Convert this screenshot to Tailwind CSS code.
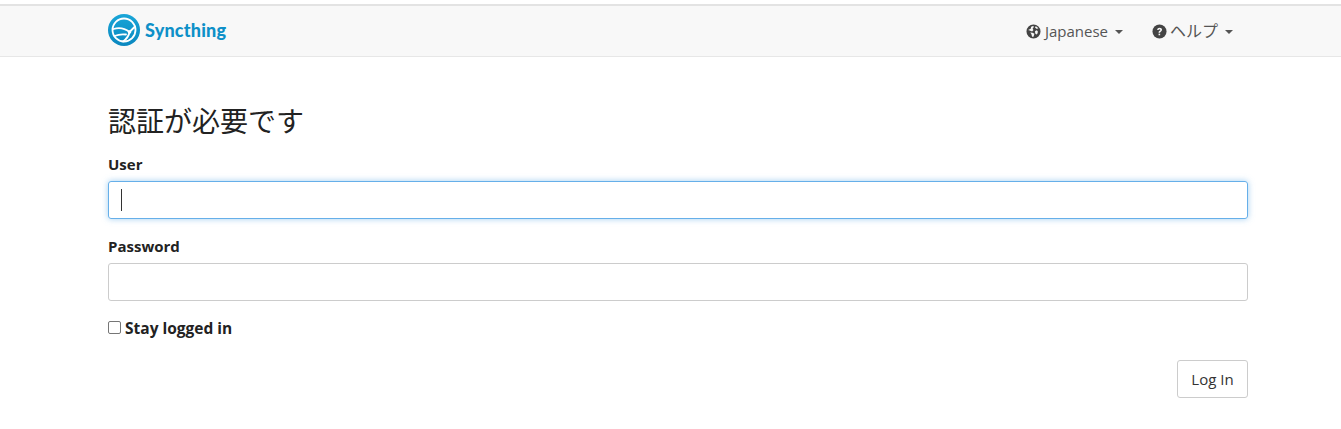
<!DOCTYPE html>
<html lang="ja">
<head>
  <meta charset="UTF-8">
  <meta name="viewport" content="width=device-width, initial-scale=1.0">
  <title>Syncthing</title>
  <script src="https://cdn.jsdelivr.net/npm/@tailwindcss/browser@4"></script>
</head>
<body class="bg-white h-[429px] overflow-hidden text-[#333] font-['Open_Sans','Noto_Sans_CJK_JP',sans-serif]">
  <div class="pt-1">
    <nav class="h-[53px] bg-[#f8f8f8] border-t-2 border-t-[#e3e3e3] border-b border-b-[#e7e7e7] px-[108px] flex items-center justify-between">
      <a href="#" class="flex items-center gap-[5px] -mt-[2px]">
        <svg class="w-8 h-8" viewBox="0 0 32 32" fill="none">
          <defs>
            <linearGradient id="logoFill" x1="0" y1="0" x2="0" y2="1">
              <stop offset="0" stop-color="#1aa6d8"/>
              <stop offset="1" stop-color="#0a87bf"/>
            </linearGradient>
          </defs>
          <circle cx="16" cy="16" r="16" fill="url(#logoFill)"/>
          <circle cx="16" cy="16" r="11.500" stroke="#fff" stroke-width="1.800"/>
          <path d="M5.500 15C10.500 13.500 17 14.500 21.500 18L27 12.500M21.500 18C21 21.500 18.500 25 15 27.500M6.500 22C10 20.500 14 20 18 20.500" stroke="#fff" stroke-width="1.800" stroke-linecap="round"/>
          <circle cx="21.500" cy="18" r="1.800" fill="#fff"/>
        </svg>
        <span class="text-[#0e90c8] text-[18px] font-black leading-none tracking-[0.2px] font-['Lato',sans-serif]">Syncthing</span>
      </a>
      <div class="flex items-center gap-[29px] text-[15px] text-[#555]">
        <a href="#" class="flex items-center">
          <svg class="w-[15px] h-[15px] mr-[4px]" viewBox="0 0 16 16" fill="#444">
            <path d="M8 .5a7.500 7.500 0 1 0 0 15 7.500 7.500 0 0 0 0-15Zm-5.700 6L5 5l.5-2 2-1 1 1L7 5l1 1.500L6.500 8 4 7Zm4.200 7.200-.8-3L4.500 9l2.500.3 2 1.200-1 3.200Zm5-2.400-1.500-1-.5-2.300 1.500-1.300 1.500.8c.2 1.500-.1 2.800-1 3.800ZM11 5 9.500 3.500l1-1c1.200.5 2.100 1.300 2.700 2.300Z"/>
          </svg>
          <span>Japanese</span>
          <span class="ml-[7px] mt-[2px] border-x-4 border-x-transparent border-t-4 border-t-[#555]"></span>
        </a>
        <a href="#" class="flex items-center">
          <svg class="w-[15px] h-[15px] mr-[3px]" viewBox="0 0 16 16">
            <circle cx="8" cy="8" r="7.500" fill="#444"/>
            <path d="M5.500 6.300C5.600 4.900 6.700 4 8.100 4c1.500 0 2.600.9 2.600 2.200 0 1-.6 1.500-1.300 2-.6.400-.8.600-.8 1.200H7c0-1.100.4-1.600 1.100-2.100.5-.3.800-.6.800-1 0-.5-.4-.8-.9-.8-.6 0-.9.300-1 .9Z" fill="#f8f8f8"/>
            <rect x="7" y="10.300" width="1.700" height="1.700" fill="#f8f8f8"/>
          </svg>
          <span class="text-[16px]">ヘルプ</span>
          <span class="ml-[7px] mt-[2px] border-x-4 border-x-transparent border-t-4 border-t-[#555]"></span>
        </a>
      </div>
    </nav>
    <main class="pl-[108px] w-[1248px]">
      <h1 class="mt-[46px] text-[28px] leading-[36px] text-[#222]">認証が必要です</h1>
      <form>
        <label class="block mt-[15px] text-[15px] leading-[20px] font-bold text-[#222]" for="user">User</label>
        <div class="relative mt-[7px]">
          <input id="user" type="text" class="block w-full h-[38px] px-3 border border-[#66afe9] rounded-[3px] outline-none shadow-[0_0_6px_rgba(102,175,233,0.6)]">
          <span class="absolute left-[13px] top-[8px] w-px h-[22px] bg-[#333]"></span>
        </div>
        <label class="block mt-[17px] text-[15px] leading-[20px] font-bold text-[#222]" for="password">Password</label>
        <input id="password" type="password" class="block mt-[7px] w-full h-[38px] px-3 border border-[#ccc] rounded-[3px] outline-none">
        <label class="mt-[17px] flex items-center text-[15.5px] leading-[20px] font-bold text-[#222]">
          <span class="w-[13px] h-[13px] -mt-[1px] border border-[#767676] rounded-[2px] bg-white mr-1"></span>
          Stay logged in
        </label>
        <div class="flex justify-end mt-[22px]">
          <button type="button" class="h-[38px] w-[71px] border border-[#ccc] rounded-[3px] bg-white text-[15px] text-[#333]">Log In</button>
        </div>
      </form>
    </main>
  </div>
</body>
</html>
